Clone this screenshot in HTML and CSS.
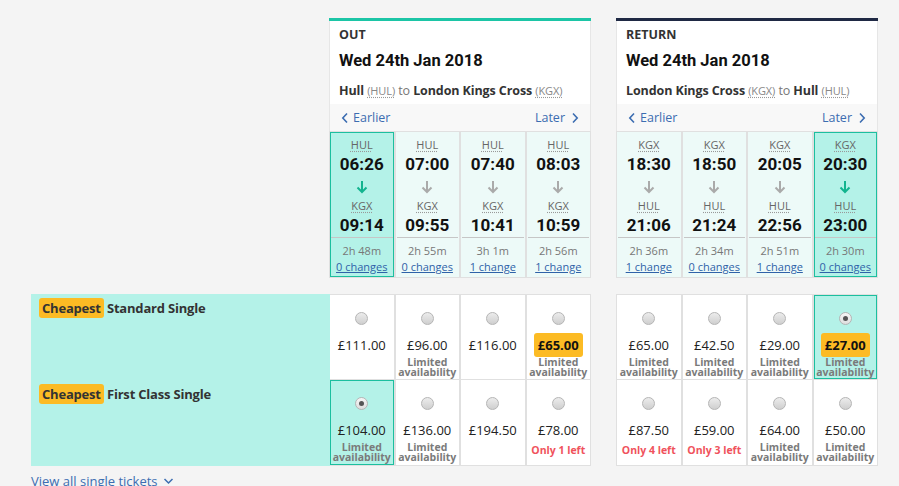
FILE: index.html
```html
<!DOCTYPE html>
<html lang="en">
<head>
<meta charset="utf-8">
<title>Journey results</title>
<link rel="stylesheet" href="styles.css">
</head>
<body>
<main class="page">
  <section class="journeys">
    <div class="spacer"></div>

    <div class="card out">
      <header class="card-head">
        <div class="dir">OUT</div>
        <div class="date">Wed 24th Jan 2018</div>
        <div class="route"><b>Hull</b> <abbr>(HUL)</abbr> to <b>London Kings Cross</b> <abbr>(KGX)</abbr></div>
      </header>
      <nav class="pager">
        <a class="earlier"><svg width="8" height="12" viewBox="0 0 8 12"><path d="M6 1.5 1.8 6 6 10.5" fill="none" stroke="currentColor" stroke-width="1.6"/></svg>Earlier</a>
        <a class="later">Later<svg width="8" height="12" viewBox="0 0 8 12"><path d="M2 1.5 6.2 6 2 10.5" fill="none" stroke="currentColor" stroke-width="1.6"/></svg></a>
      </nav>
      <div class="slots">
        <div class="slot sel">
          <div class="stop"><abbr>HUL</abbr></div><div class="t">06:26</div>
          <svg class="arr" width="12" height="16" viewBox="0 0 12 16"><path d="M6 2v11M1.5 8.5 6 13l4.5-4.5" fill="none" stroke="currentColor" stroke-width="2"/></svg>
          <div class="stop"><abbr>KGX</abbr></div><div class="t">09:14</div>
          <div class="dur"><div>2h 48m</div><a>0 changes</a></div>
        </div>
        <div class="slot">
          <div class="stop"><abbr>HUL</abbr></div><div class="t">07:00</div>
          <svg class="arr" width="12" height="16" viewBox="0 0 12 16"><path d="M6 2v11M1.5 8.5 6 13l4.5-4.5" fill="none" stroke="currentColor" stroke-width="2"/></svg>
          <div class="stop"><abbr>KGX</abbr></div><div class="t">09:55</div>
          <div class="dur"><div>2h 55m</div><a>0 changes</a></div>
        </div>
        <div class="slot">
          <div class="stop"><abbr>HUL</abbr></div><div class="t">07:40</div>
          <svg class="arr" width="12" height="16" viewBox="0 0 12 16"><path d="M6 2v11M1.5 8.5 6 13l4.5-4.5" fill="none" stroke="currentColor" stroke-width="2"/></svg>
          <div class="stop"><abbr>KGX</abbr></div><div class="t">10:41</div>
          <div class="dur"><div>3h 1m</div><a>1 change</a></div>
        </div>
        <div class="slot">
          <div class="stop"><abbr>HUL</abbr></div><div class="t">08:03</div>
          <svg class="arr" width="12" height="16" viewBox="0 0 12 16"><path d="M6 2v11M1.5 8.5 6 13l4.5-4.5" fill="none" stroke="currentColor" stroke-width="2"/></svg>
          <div class="stop"><abbr>KGX</abbr></div><div class="t">10:59</div>
          <div class="dur"><div>2h 56m</div><a>1 change</a></div>
        </div>
      </div>
    </div>

    <div class="gap"></div>

    <div class="card ret">
      <header class="card-head">
        <div class="dir">RETURN</div>
        <div class="date">Wed 24th Jan 2018</div>
        <div class="route"><b>London Kings Cross</b> <abbr>(KGX)</abbr> to <b>Hull</b> <abbr>(HUL)</abbr></div>
      </header>
      <nav class="pager">
        <a class="earlier"><svg width="8" height="12" viewBox="0 0 8 12"><path d="M6 1.5 1.8 6 6 10.5" fill="none" stroke="currentColor" stroke-width="1.6"/></svg>Earlier</a>
        <a class="later">Later<svg width="8" height="12" viewBox="0 0 8 12"><path d="M2 1.5 6.2 6 2 10.5" fill="none" stroke="currentColor" stroke-width="1.6"/></svg></a>
      </nav>
      <div class="slots">
        <div class="slot">
          <div class="stop"><abbr>KGX</abbr></div><div class="t">18:30</div>
          <svg class="arr" width="12" height="16" viewBox="0 0 12 16"><path d="M6 2v11M1.5 8.5 6 13l4.5-4.5" fill="none" stroke="currentColor" stroke-width="2"/></svg>
          <div class="stop"><abbr>HUL</abbr></div><div class="t">21:06</div>
          <div class="dur"><div>2h 36m</div><a>1 change</a></div>
        </div>
        <div class="slot">
          <div class="stop"><abbr>KGX</abbr></div><div class="t">18:50</div>
          <svg class="arr" width="12" height="16" viewBox="0 0 12 16"><path d="M6 2v11M1.5 8.5 6 13l4.5-4.5" fill="none" stroke="currentColor" stroke-width="2"/></svg>
          <div class="stop"><abbr>HUL</abbr></div><div class="t">21:24</div>
          <div class="dur"><div>2h 34m</div><a>0 changes</a></div>
        </div>
        <div class="slot">
          <div class="stop"><abbr>KGX</abbr></div><div class="t">20:05</div>
          <svg class="arr" width="12" height="16" viewBox="0 0 12 16"><path d="M6 2v11M1.5 8.5 6 13l4.5-4.5" fill="none" stroke="currentColor" stroke-width="2"/></svg>
          <div class="stop"><abbr>HUL</abbr></div><div class="t">22:56</div>
          <div class="dur"><div>2h 51m</div><a>1 change</a></div>
        </div>
        <div class="slot sel">
          <div class="stop"><abbr>KGX</abbr></div><div class="t">20:30</div>
          <svg class="arr" width="12" height="16" viewBox="0 0 12 16"><path d="M6 2v11M1.5 8.5 6 13l4.5-4.5" fill="none" stroke="currentColor" stroke-width="2"/></svg>
          <div class="stop"><abbr>HUL</abbr></div><div class="t">23:00</div>
          <div class="dur"><div>2h 30m</div><a>0 changes</a></div>
        </div>
      </div>
    </div>
  </section>

  <section class="fares">
    <div class="labels">
      <div class="label"><span class="badge">Cheapest</span> Standard Single</div>
      <div class="label"><span class="badge">Cheapest</span> First Class Single</div>
    </div>

    <div class="fare-row out-std">
      <div class="fare"><span class="radio"></span><div class="price">£111.00</div></div>
      <div class="fare"><span class="radio"></span><div class="price">£96.00</div><div class="note">Limited availability</div></div>
      <div class="fare"><span class="radio"></span><div class="price">£116.00</div></div>
      <div class="fare"><span class="radio"></span><div class="price"><span class="cheap">£65.00</span></div><div class="note">Limited availability</div></div>
    </div>
    <div class="fare-row ret-std">
      <div class="fare"><span class="radio"></span><div class="price">£65.00</div><div class="note">Limited availability</div></div>
      <div class="fare"><span class="radio"></span><div class="price">£42.50</div><div class="note">Limited availability</div></div>
      <div class="fare"><span class="radio"></span><div class="price">£29.00</div><div class="note">Limited availability</div></div>
      <div class="fare sel"><span class="radio on"></span><div class="price"><span class="cheap">£27.00</span></div><div class="note">Limited availability</div></div>
    </div>
    <div class="fare-row out-first">
      <div class="fare sel"><span class="radio on"></span><div class="price">£104.00</div><div class="note">Limited availability</div></div>
      <div class="fare"><span class="radio"></span><div class="price">£136.00</div><div class="note">Limited availability</div></div>
      <div class="fare"><span class="radio"></span><div class="price">£194.50</div></div>
      <div class="fare"><span class="radio"></span><div class="price">£78.00</div><div class="note low">Only 1 left</div></div>
    </div>
    <div class="fare-row ret-first">
      <div class="fare"><span class="radio"></span><div class="price">£87.50</div><div class="note low">Only 4 left</div></div>
      <div class="fare"><span class="radio"></span><div class="price">£59.00</div><div class="note low">Only 3 left</div></div>
      <div class="fare"><span class="radio"></span><div class="price">£64.00</div><div class="note">Limited availability</div></div>
      <div class="fare"><span class="radio"></span><div class="price">£50.00</div><div class="note">Limited availability</div></div>
    </div>
  </section>

  <a class="view-all">View all single tickets <svg width="11" height="8" viewBox="0 0 11 8"><path d="M1.5 2 5.5 6 9.5 2" fill="none" stroke="currentColor" stroke-width="1.5"/></svg></a>
</main>
</body>
</html>
```

FILE: styles.css
```css
* { box-sizing: border-box; }

body {
  margin: 0;
  background: #f4f4f4;
  font-family: "Open Sans", "Liberation Sans", sans-serif;
  color: #222;
}

.page {
  padding: 18px 21px 0 31px;
}

a { color: #3467ad; cursor: pointer; }

abbr {
  text-decoration: underline dotted #999;
  text-underline-offset: 2px;
}

/* ---------- journeys ---------- */
.journeys {
  display: grid;
  grid-template-columns: 298px 262px 25px 262px;
}

.card {
  background: #fff;
  border-top: 3px solid #1cc5a6;
}
.card.ret { border-top-color: #1f2944; }

.card-head {
  padding: 5px 9px 4px;
  border-left: 1px solid #e6e6e6;
  border-right: 1px solid #e6e6e6;
}

.dir {
  font-family: "Open Sans", sans-serif;
  font-weight: 700;
  font-size: 12.5px;
  line-height: 17px;
  color: #333;
}

.date {
  margin-top: 6px;
  font-family: Roboto, "Liberation Sans", sans-serif;
  font-weight: 700;
  font-size: 16.5px;
  line-height: 24px;
  color: #111;
}

.route {
  margin-top: 9px;
  font-size: 12.5px;
  line-height: 18px;
  color: #777;
  letter-spacing: -0.1px;
}
.route b { color: #333; font-weight: 700; }
.route abbr { font-size: 11px; color: #888; }

.pager {
  height: 27px;
  background: #f8f8f8;
  display: flex;
  justify-content: space-between;
  align-items: center;
  padding: 0 11px 0 11px;
  border-left: 1px solid #e6e6e6;
  border-right: 1px solid #e6e6e6;
  font-size: 12.5px;
}
.pager a {
  display: flex;
  align-items: center;
  gap: 4px;
  color: #3c6db1;
}
.pager .later { gap: 6px; }

.slots {
  display: grid;
  grid-template-columns: repeat(4, 1fr);
  gap: 2px;
  padding: 1px;
  background: #e0e0e0;
}

.slot {
  background: #edfaf8;
  border: 1px solid transparent;
  text-align: center;
  display: flex;
  flex-direction: column;
  align-items: center;
}
.slot.sel {
  background: #b4f2e8;
  border-color: #1cbf9f;
}

.stop {
  font-size: 11px;
  line-height: 14px;
  color: #666;
  margin-top: 5px;
}
.stop + .t { margin-top: 2px; }
.arr + .stop { margin-top: 4px; }

.t {
  font-family: Roboto, "Liberation Sans", sans-serif;
  font-weight: 700;
  font-size: 17px;
  line-height: 20px;
  color: #111;
}

.arr {
  margin-top: 5px;
  color: #aaa;
  display: block;
}
.slot.sel .arr { color: #13b48f; }

.dur {
  align-self: stretch;
  margin-top: 2px;
  border-top: 1px solid #c6c6c6;
  padding: 5px 0 1px;
  font-size: 11px;
  color: #777;
}
.dur div { line-height: 16px; }
.dur a {
  display: block;
  line-height: 16px;
  color: #2f62a8;
  text-decoration: underline;
}

/* ---------- fares ---------- */
.fares {
  margin-top: 16px;
  display: grid;
  grid-template-columns: 299px 261px 25px 262px;
  grid-template-rows: 86px 86px;
}

.labels {
  grid-column: 1;
  grid-row: 1 / 3;
  background: #b4f2e8;
  display: grid;
  grid-template-rows: 86px 86px;
}

.label {
  padding: 4px 8px;
  font-weight: 700;
  font-size: 13px;
  line-height: 20px;
  color: #333;
  letter-spacing: -0.2px;
}

.badge {
  display: inline-block;
  background: #fcbb24;
  border-radius: 3px;
  padding: 0 3px;
  color: #333;
}

.fare-row {
  display: grid;
  grid-template-columns: repeat(4, 1fr);
  gap: 2px;
  padding: 1px;
  background: #e0e0e0;
}
.out-std { grid-column: 2; grid-row: 1; padding-left: 0; }
.ret-std { grid-column: 4; grid-row: 1; }
.out-first { grid-column: 2; grid-row: 2; padding-left: 0; padding-top: 0; }
.ret-first { grid-column: 4; grid-row: 2; padding-top: 0; }

.fare {
  background: #fff;
  border: 1px solid transparent;
  display: flex;
  flex-direction: column;
  align-items: center;
  padding-top: 16px;
  text-align: center;
}
.fare.sel {
  background: #b4f2e8;
  border-color: #1cbf9f;
}

.radio {
  width: 13px;
  height: 13px;
  border-radius: 50%;
  border: 1px solid #b5b5b5;
  background: linear-gradient(#ececec, #cfcfcf);
  position: relative;
}
.radio.on {
  background: linear-gradient(#f6f6f6, #dedede);
}
.radio.on::after {
  content: "";
  position: absolute;
  left: 3px;
  top: 3px;
  width: 5px;
  height: 5px;
  border-radius: 50%;
  background: #555;
}

.price {
  margin-top: 11px;
  font-size: 13px;
  line-height: 18px;
  color: #222;
}

.cheap {
  background: #fcbb24;
  border-radius: 3px;
  padding: 3px 4px;
  font-weight: 700;
  color: #111;
}

.note {
  margin-top: 3px;
  font-size: 10.5px;
  font-weight: 700;
  line-height: 10px;
  color: #7a7a7a;
  width: 60px;
}
.note.low {
  color: #f0525c;
  margin-top: 6px;
  width: auto;
}

.view-all {
  display: inline-flex;
  align-items: center;
  gap: 5px;
  margin-top: 7px;
  font-size: 13px;
  line-height: 16px;
  color: #3c6db1;
}
```
